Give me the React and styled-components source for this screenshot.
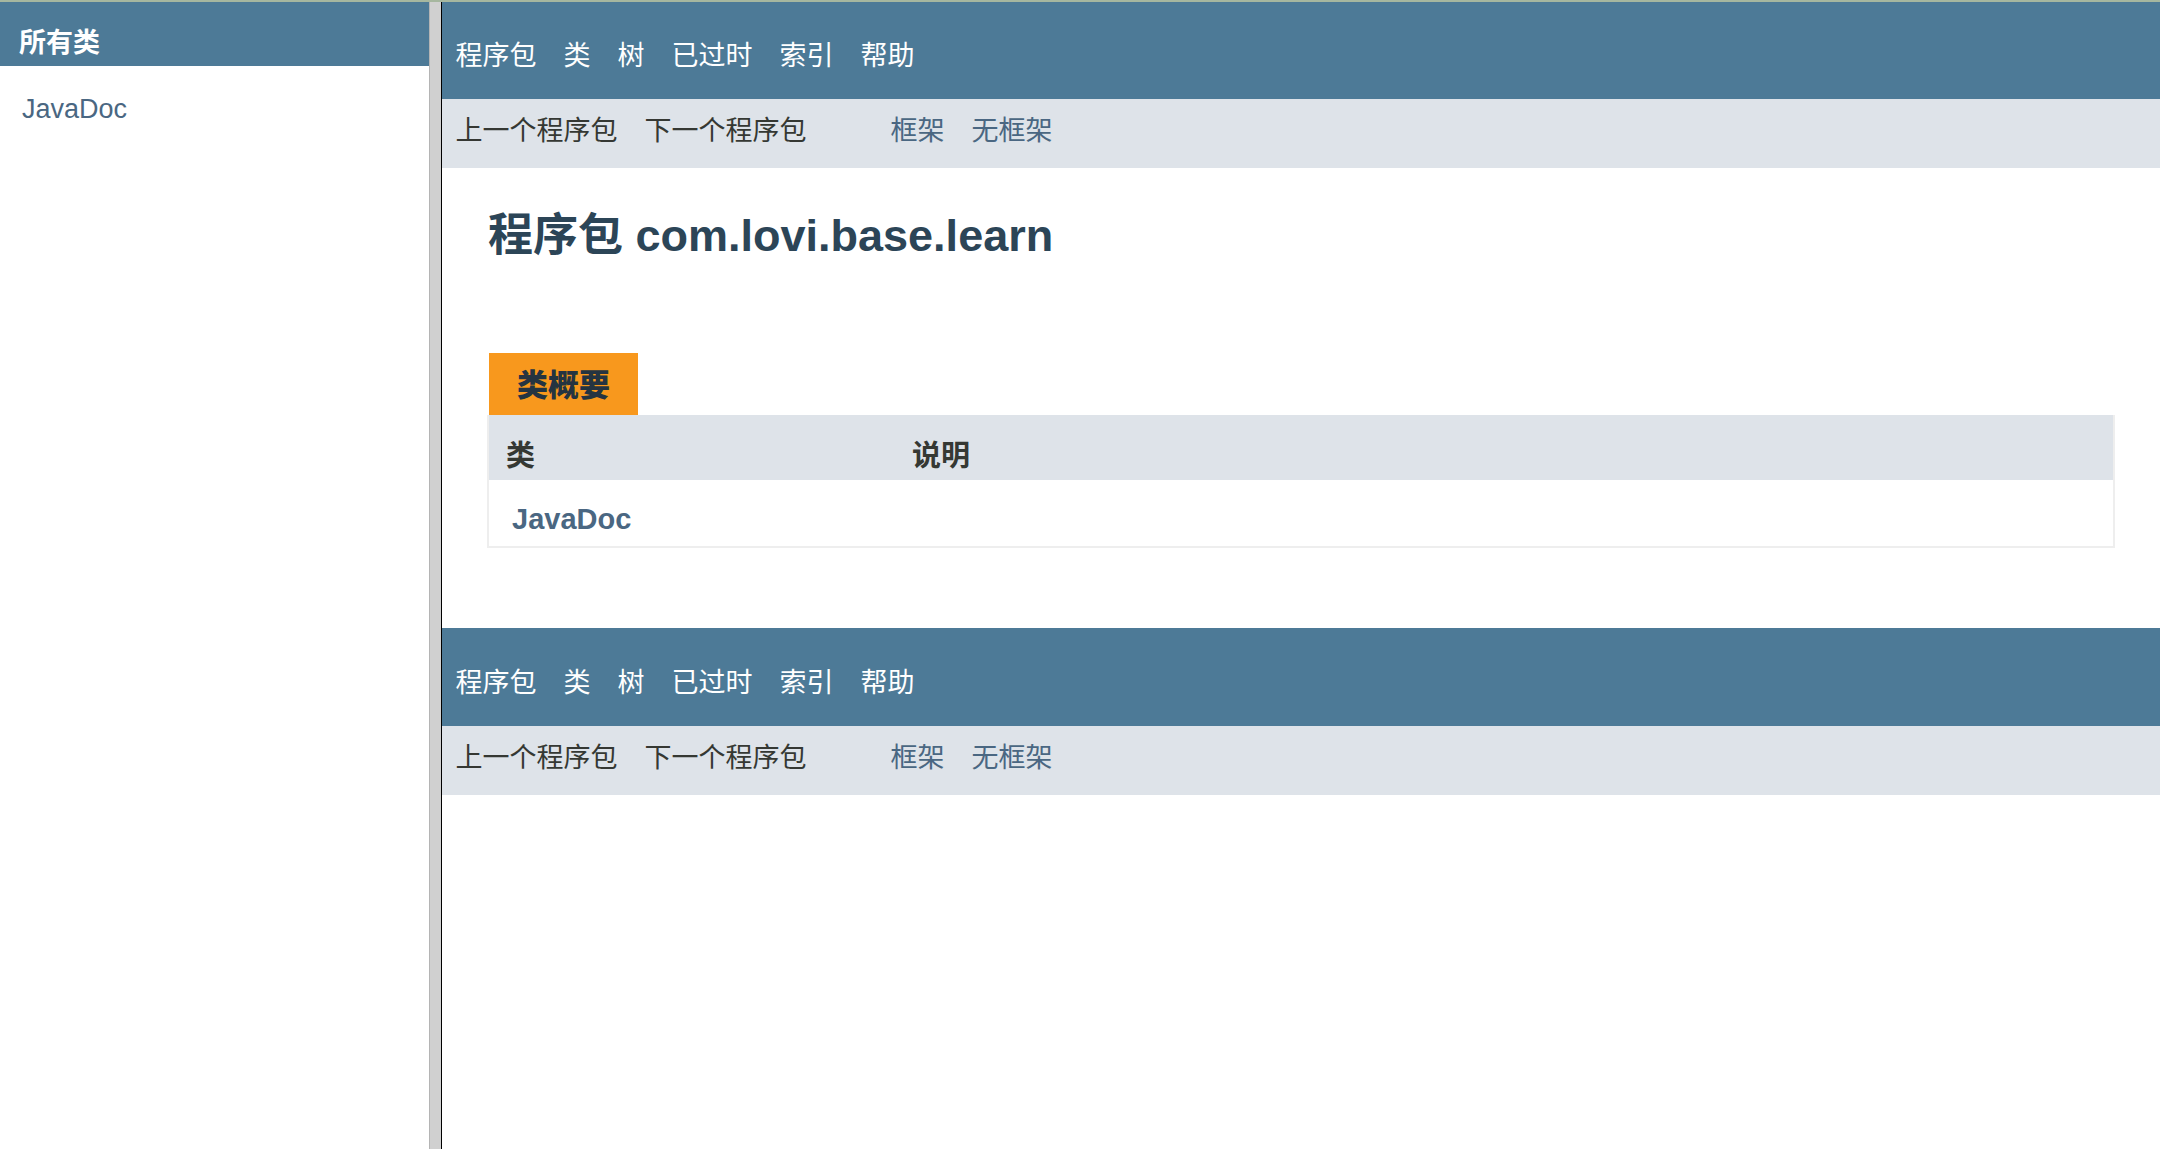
import React from "react";
import styled, { createGlobalStyle } from "styled-components";

const GlobalStyle = createGlobalStyle`
  html, body {
    margin: 0;
    padding: 0;
    background: #ffffff;
  }
  body {
    font-family: "Liberation Sans", "Noto Sans CJK SC", sans-serif;
    color: #353833;
  }
`;

const navItems = ["程序包", "类", "树", "已过时", "索引", "帮助"];

const Page = styled.div`
  display: flex;
  height: 100vh;
  overflow: hidden;
  border-top: 2px solid #a6b79f;
  box-sizing: border-box;
`;

const ClassFrame = styled.div`
  width: 429px;
  flex: none;
  background: #ffffff;
`;

const Bar = styled.div`
  height: 64px;
  box-sizing: border-box;
  padding: 26px 11px 7px 19px;
  background: #4d7a97;
  color: #ffffff;
  font-size: 27px;
  font-weight: bold;
  line-height: 31px;
`;

const ClassList = styled.ul`
  list-style: none;
  margin: 0;
  padding: 28px 0 0 22px;
`;

const ClassItem = styled.li`
  font-size: 27px;
  line-height: 31px;
  color: #4a6782;
`;

const Splitter = styled.div`
  width: 13px;
  flex: none;
  background: #d0d0d0;
  border-left: 1px solid #b4b4b4;
  border-right: 1px solid #000000;
  box-sizing: border-box;
`;

const MainFrame = styled.div`
  flex: 1;
  min-width: 0;
  background: #ffffff;
`;

const TopNav = styled.div`
  height: ${(p) => (p.$first ? "97px" : "98px")};
  box-sizing: border-box;
  padding-top: ${(p) => (p.$first ? "39px" : "40px")};
  background: #4d7a97;
`;

const NavList = styled.ul`
  display: flex;
  list-style: none;
  margin: 0;
  padding: 0;
`;

const NavItem = styled.li`
  padding: 0 13.5px;
  font-size: 27px;
  line-height: 31px;
  color: ${(p) => (p.$link ? "#4a6782" : p.$light ? "#ffffff" : "#353833")};
`;

const SubNav = styled.div`
  display: flex;
  height: 69px;
  box-sizing: border-box;
  padding-top: 17px;
  background: #dee3e9;
`;

const SubGroup = styled(NavList)`
  margin-right: 57px;
`;

const Header = styled.div`
  padding: 42px 45px 0 46px;
`;

const Title = styled.h1`
  margin: 0;
  font-size: 45px;
  line-height: 52px;
  font-weight: bold;
  color: #2c4557;
`;

const Content = styled.div`
  padding: 91px 45px 80px 45px;
`;

const Caption = styled.div`
  display: inline-block;
  margin-left: 2px;
  height: 62px;
  box-sizing: border-box;
  padding: 15px 28px 0 28px;
  background: #f8981d;
  color: #253441;
  font-size: 31px;
  font-weight: 900;
  line-height: 36px;
`;

const Table = styled.div`
  border: 2px solid #eeeeee;
  border-top: none;
`;

const Row = styled.div`
  display: grid;
  grid-template-columns: 25% 1fr;
  height: ${(p) => (p.$head ? "65px" : "66px")};
  background: ${(p) => (p.$head ? "#dee3e9" : "#ffffff")};
`;

const Cell = styled.div`
  padding: ${(p) => (p.$head ? "24px 7px 0 17px" : "22px 7px 0 23px")};
  font-size: 29px;
  line-height: 34px;
  font-weight: bold;
  color: ${(p) => (p.$link ? "#4a6782" : "#353833")};
`;

const NavBlock = ({ first }) => (
  <>
    <TopNav $first={first}>
      <NavList>
        {navItems.map((item) => (
          <NavItem key={item} $light>
            {item}
          </NavItem>
        ))}
      </NavList>
    </TopNav>
    <SubNav>
      <SubGroup>
        <NavItem>上一个程序包</NavItem>
        <NavItem>下一个程序包</NavItem>
      </SubGroup>
      <NavList>
        <NavItem $link>框架</NavItem>
        <NavItem $link>无框架</NavItem>
      </NavList>
    </SubNav>
  </>
);

export default function App() {
  return (
    <>
      <GlobalStyle />
      <Page>
        <ClassFrame>
          <Bar>所有类</Bar>
          <ClassList>
            <ClassItem>JavaDoc</ClassItem>
          </ClassList>
        </ClassFrame>
        <Splitter />
        <MainFrame>
          <NavBlock first />
          <Header>
            <Title>程序包 com.lovi.base.learn</Title>
          </Header>
          <Content>
            <Caption>类概要</Caption>
            <Table>
              <Row $head>
                <Cell $head>类</Cell>
                <Cell $head>说明</Cell>
              </Row>
              <Row>
                <Cell $link>JavaDoc</Cell>
                <Cell />
              </Row>
            </Table>
          </Content>
          <NavBlock />
        </MainFrame>
      </Page>
    </>
  );
}
